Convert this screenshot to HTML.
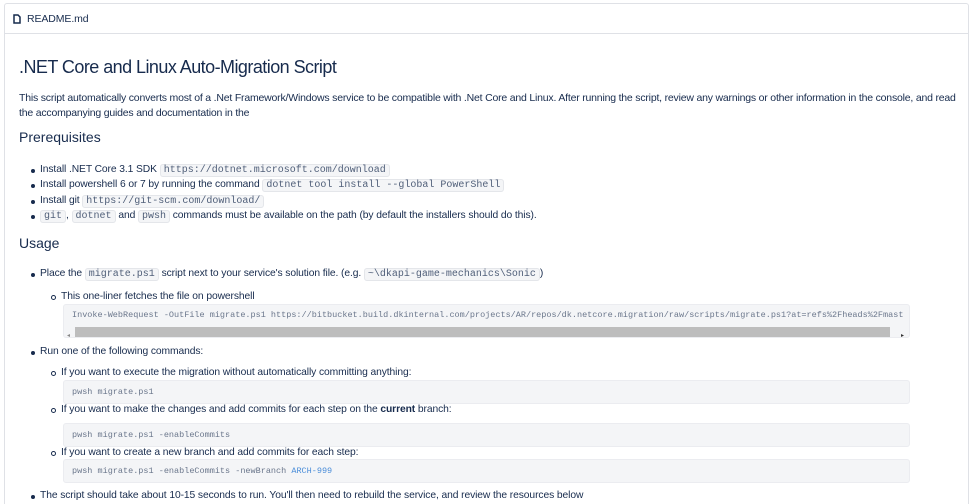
<!DOCTYPE html>
<html><head><meta charset="utf-8">
<style>
*{margin:0;padding:0;box-sizing:border-box}
html{width:977px;height:504px;overflow:hidden}
body{width:977px;height:504px;background:#fff;font-family:"Liberation Sans",sans-serif;color:#172b4d;overflow:hidden;position:relative}
.box{position:absolute;left:4px;top:3px;width:965px;height:510px;border:1px solid #dfe1e6;border-radius:3px}
.hdr{position:absolute;left:4px;top:33px;width:965px;height:1px;background:#dfe1e6}
.a{position:absolute;white-space:nowrap;font-size:10.3px;letter-spacing:-0.1px;line-height:14px}
code{font-family:"Liberation Mono",monospace;font-size:10px;background:#f4f5f7;border:1px solid #e4e6ea;border-radius:3px;padding:0 3px;color:#505f79;letter-spacing:0}
.pre{position:absolute;left:63px;width:847px;background:#f4f5f7;border:1px solid #ebecf0;border-radius:3px;font-family:"Liberation Mono",monospace;font-size:8.5px;color:#6b778c;padding-left:8px;white-space:nowrap;overflow:hidden}
.b{position:absolute;width:4px;height:4px;border-radius:50%;background:#172b4d}
.c{position:absolute;width:5px;height:5px;border-radius:50%;border:1px solid #172b4d}
h1,h2{position:absolute;font-weight:normal;white-space:nowrap;color:#172b4d}
</style></head><body>
<div class="box"></div>
<div class="hdr"></div>
<svg style="position:absolute;left:13px;top:14px" width="8" height="10" viewBox="0 0 8 10"><path d="M1 1h4l2 2v6H1z" fill="none" stroke="#172b4d" stroke-width="1.5"/></svg>
<div class="a" style="left:27px;top:12px;font-size:10.5px">README.md</div>

<h1 style="left:19px;top:57px;font-size:18px;letter-spacing:-0.55px">.NET Core and Linux Auto-Migration Script</h1>
<div class="a" style="left:19px;top:91px;font-size:10.5px;letter-spacing:-0.2px">This script automatically converts most of a .Net Framework/Windows service to be compatible with .Net Core and Linux. After running the script, review any warnings or other information in the console, and read</div>
<div class="a" style="left:19px;top:106px;font-size:10.5px;letter-spacing:-0.2px">the accompanying guides and documentation in the</div>
<h2 style="left:19px;top:129px;font-size:14px">Prerequisites</h2>

<div class="b" style="left:31px;top:169px"></div>
<div class="a" style="left:40px;top:163px">Install .NET Core 3.1 SDK <code>https://dotnet.microsoft.com/download</code></div>
<div class="b" style="left:31px;top:184px"></div>
<div class="a" style="left:40px;top:178px">Install powershell 6 or 7 by running the command <code>dotnet tool install --global PowerShell</code></div>
<div class="b" style="left:31px;top:200px"></div>
<div class="a" style="left:40px;top:194px">Install git <code>https://git-scm.com/download/</code></div>
<div class="b" style="left:31px;top:215px"></div>
<div class="a" style="left:40px;top:209px"><code>git</code>, <code>dotnet</code> and <code>pwsh</code> commands must be available on the path (by default the installers should do this).</div>

<h2 style="left:19px;top:235px;font-size:14px">Usage</h2>

<div class="b" style="left:31px;top:273px"></div>
<div class="a" style="left:40px;top:267px">Place the <code>migrate.ps1</code> script next to your service's solution file. (e.g. <code>~\dkapi-game-mechanics\Sonic</code>)</div>
<div class="c" style="left:51px;top:295px"></div>
<div class="a" style="left:61px;top:290px">This one-liner fetches the file on powershell</div>
<div class="pre" style="top:304px;height:34px;line-height:20px">Invoke-WebRequest -OutFile migrate.ps1 https://bitbucket.build.dkinternal.com/projects/AR/repos/dk.netcore.migration/raw/scripts/migrate.ps1?at=refs%2Fheads%2Fmast
<div style="position:absolute;left:11px;top:22px;width:815px;height:10px;background:#bdbdbd"></div>
<div style="position:absolute;left:3px;top:21px;font-size:6px;color:#888">◂</div>
<div style="position:absolute;left:837px;top:21px;font-size:6px;color:#333">▸</div>
</div>

<div class="b" style="left:31px;top:351px"></div>
<div class="a" style="left:40px;top:345px">Run one of the following commands:</div>
<div class="c" style="left:51px;top:371px"></div>
<div class="a" style="left:61px;top:366px">If you want to execute the migration without automatically committing anything:</div>
<div class="pre" style="top:380px;height:24px;line-height:22px">pwsh migrate.ps1</div>
<div class="c" style="left:51px;top:408px"></div>
<div class="a" style="left:61px;top:403px">If you want to make the changes and add commits for each step on the <b>current</b> branch:</div>
<div class="pre" style="top:423px;height:24px;line-height:22px">pwsh migrate.ps1 -enableCommits</div>
<div class="c" style="left:51px;top:451px"></div>
<div class="a" style="left:61px;top:446px">If you want to create a new branch and add commits for each step:</div>
<div class="pre" style="top:459px;height:24px;line-height:22px">pwsh migrate.ps1 -enableCommits -newBranch <span style="color:#4c8ed9">ARCH-999</span></div>

<div class="b" style="left:31px;top:495px"></div>
<div class="a" style="left:40px;top:489px">The script should take about 10-15 seconds to run. You'll then need to rebuild the service, and review the resources below</div>
</body></html>
